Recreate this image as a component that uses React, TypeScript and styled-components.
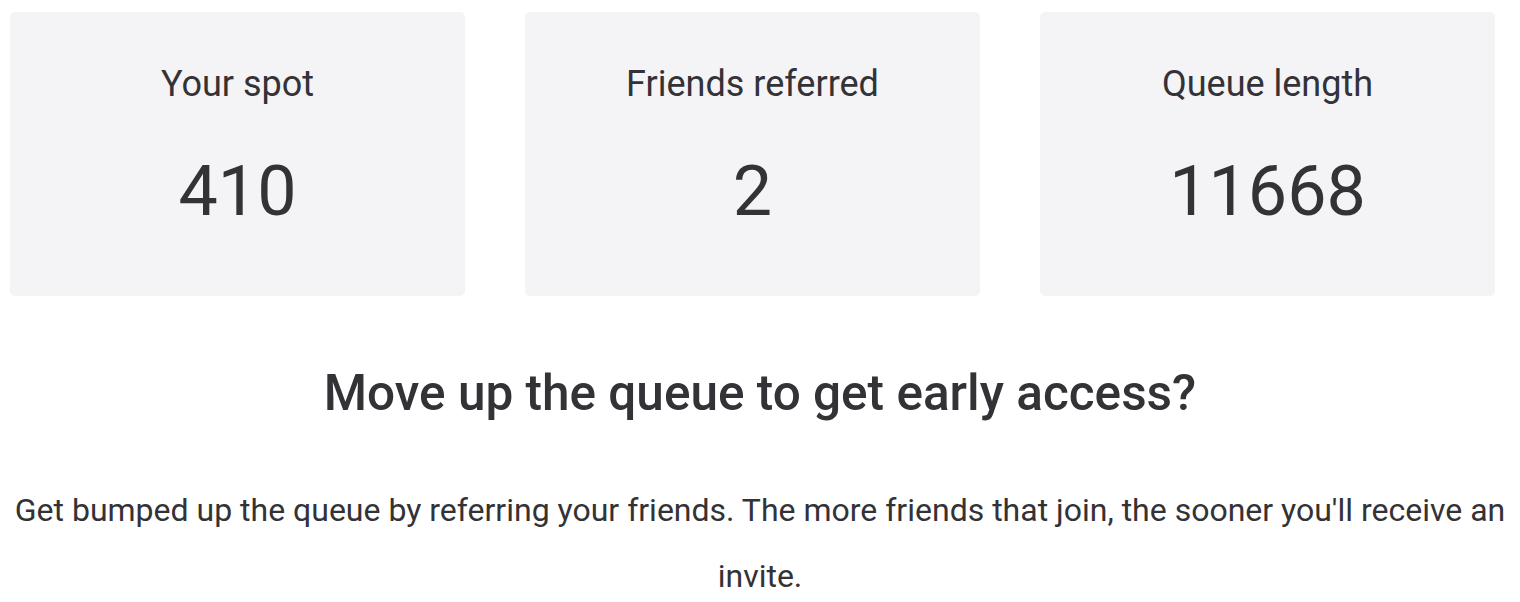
import React from 'react'
import styled, { createGlobalStyle } from 'styled-components'

const GlobalStyle = createGlobalStyle`
  body {
    margin: 0;
    background: #ffffff;
    font-family: Roboto, 'Noto Sans', sans-serif;
    color: #333236;
  }
`

const Page = styled.div`
  width: 1520px;
  padding-top: 12px;
`

const StatsRow = styled.div`
  display: grid;
  grid-template-columns: repeat(3, 455px);
  column-gap: 60px;
  padding-left: 10px;
`

const StatCard = styled.div`
  height: 284px;
  box-sizing: border-box;
  padding-top: 51px;
  background: #f4f3f6;
  border-radius: 5px;
  display: flex;
  flex-direction: column;
  align-items: center;
`

const StatLabel = styled.div`
  font-size: 36px;
  line-height: 42px;
`

const StatValue = styled.div`
  margin-top: 44px;
  font-size: 70px;
  line-height: 84px;
`

const Heading = styled.h2`
  margin: 70px 0 0;
  font-size: 49.5px;
  line-height: 55px;
  font-weight: 500;
  text-align: center;
`

const Blurb = styled.p`
  margin: 56px 0 0;
  padding: 0 8px;
  font-size: 32px;
  line-height: 66px;
  text-align: center;
`

const stats = [
  { label: 'Your spot', value: '410' },
  { label: 'Friends referred', value: '2' },
  { label: 'Queue length', value: '11668' },
]

const App: React.FC = () => {
  return (
    <>
      <GlobalStyle />
      <Page>
        <StatsRow>
          {stats.map((s) => (
            <StatCard key={s.label}>
              <StatLabel>{s.label}</StatLabel>
              <StatValue>{s.value}</StatValue>
            </StatCard>
          ))}
        </StatsRow>
        <Heading>Move up the queue to get early access?</Heading>
        <Blurb>
          Get bumped up the queue by referring your friends. The more friends that join, the sooner
          you'll receive an invite.
        </Blurb>
      </Page>
    </>
  )
}

export default App
